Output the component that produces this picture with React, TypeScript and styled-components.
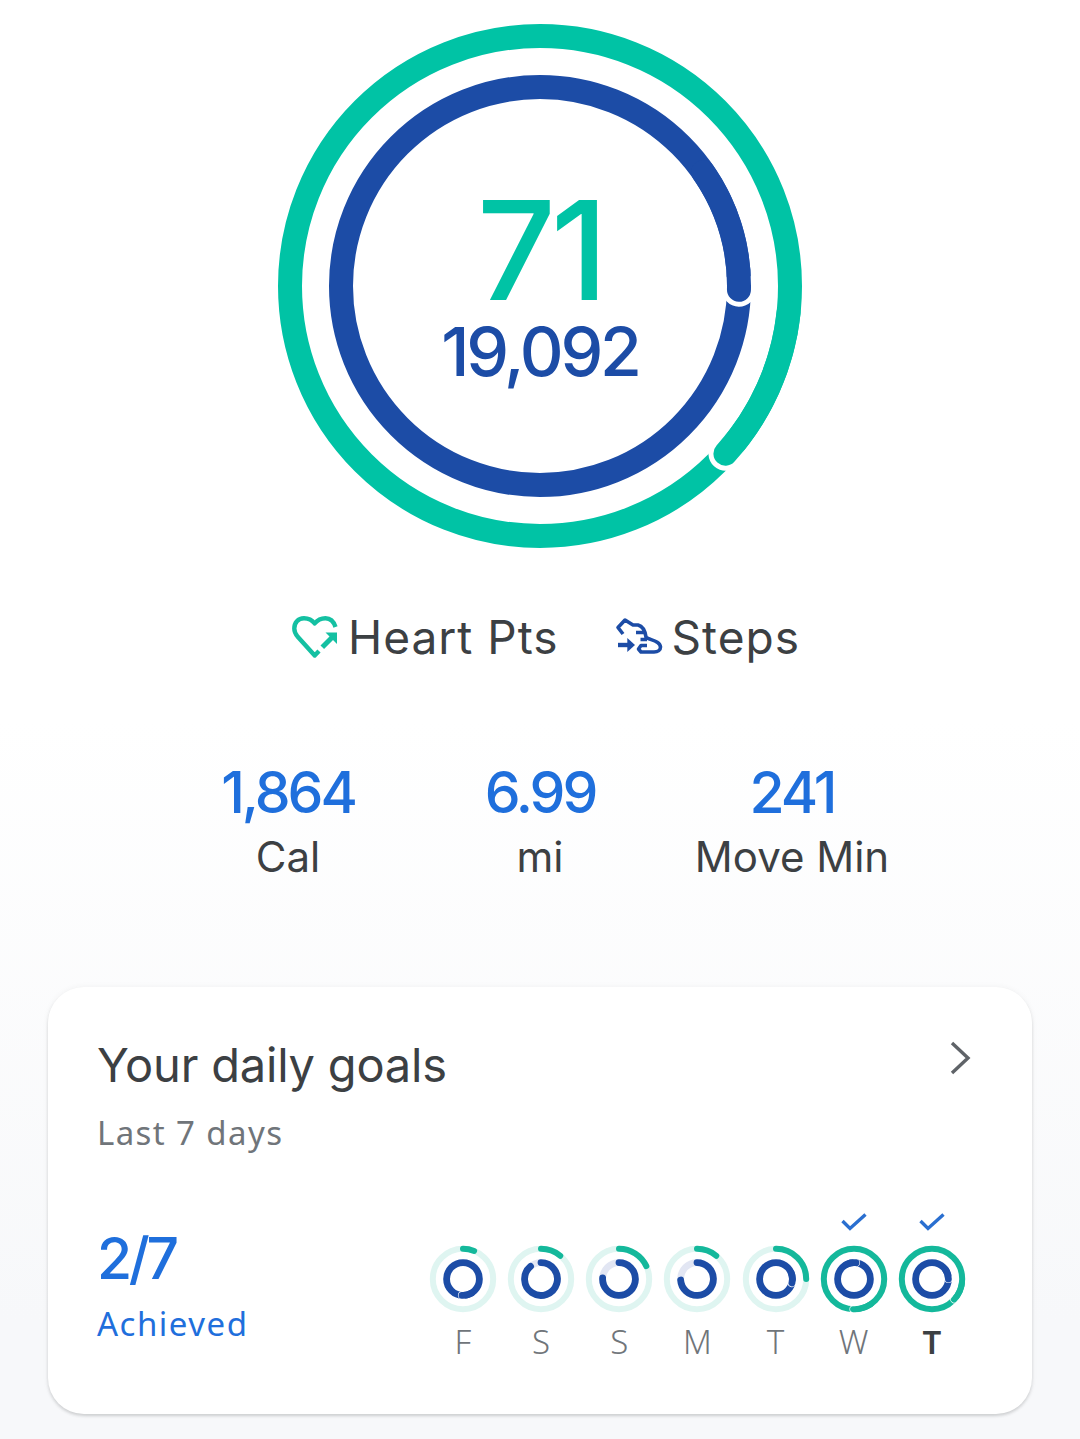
import React from "react";
import styled, { createGlobalStyle } from "styled-components";

const GREEN = "#00c3a5";
const BLUE = "#1c4ca6";
const LINK = "#1f6fdc";

const GlobalStyle = createGlobalStyle`
  html, body {
    margin: 0;
    padding: 0;
    background: #f7f8fa;
  }
  body {
    font-family: Inter, "Noto Sans", sans-serif;
    color: #3c4043;
  }
`;

const Page = styled.div`
  width: 1080px;
  height: 1439px;
  overflow: hidden;
  display: flex;
  flex-direction: column;
  align-items: center;
  padding-top: 24px;
  box-sizing: border-box;
  background: linear-gradient(#fff 0, #fff 720px, #f7f8fa 1320px);
`;

const Hero = styled.div`
  position: relative;
  width: 524px;
  height: 524px;
  flex: none;
`;

const HeroText = styled.div`
  position: absolute;
  inset: 0;
  display: flex;
  flex-direction: column;
  align-items: center;
  padding-top: 157px;
  box-sizing: border-box;
`;

const HeartCount = styled.div`
  font-size: 138px;
  line-height: 137px;
  font-weight: 550;
  color: ${GREEN};
  letter-spacing: -5px;
`;

const StepCount = styled.div`
  font-size: 68px;
  line-height: 66px;
  font-weight: 550;
  color: ${BLUE};
  letter-spacing: -3.2px;
`;

const Legend = styled.div`
  display: flex;
  align-items: center;
  gap: 56px;
  margin-top: 62px;
  margin-left: 11px;
`;

const LegendItem = styled.div`
  display: flex;
  align-items: center;
  gap: 9px;
  font-size: 46px;
  line-height: 54px;
  letter-spacing: 1px;
  color: #3c4043;
`;

const Stats = styled.div`
  display: grid;
  grid-template-columns: repeat(3, 252px);
  margin-top: 96px;
`;

const Stat = styled.div`
  display: flex;
  flex-direction: column;
  align-items: center;
`;

const StatValue = styled.div`
  font-size: 57px;
  line-height: 66px;
  font-weight: 550;
  color: ${LINK};
  letter-spacing: -3px;
`;

const StatLabel = styled.div`
  font-size: 42px;
  line-height: 50px;
  color: #3c4043;
  margin-top: 6px;
`;

const Card = styled.section`
  width: 984px;
  height: 427px;
  flex: none;
  margin-top: 105px;
  padding: 50px 61px 0 49px;
  box-sizing: border-box;
  background: #fff;
  border-radius: 36px;
  box-shadow: 0 2px 3px rgba(60, 64, 67, 0.2), 0 0 6px rgba(60, 64, 67, 0.05);
`;

const CardHead = styled.div`
  display: flex;
  justify-content: space-between;
  align-items: flex-start;
`;

const CardTitle = styled.h2`
  margin: 0;
  font-size: 47px;
  line-height: 56px;
  font-weight: 400;
  letter-spacing: -0.2px;
  color: #3c4043;
`;

const CardSub = styled.div`
  font-family: "Noto Sans", sans-serif;
  font-size: 33px;
  line-height: 44px;
  color: #70757a;
  letter-spacing: 1.4px;
  margin-top: 18px;
`;

const Chevron = styled.svg`
  width: 24px;
  height: 36px;
  margin: 3px -1px 0 0;
`;

const GoalsRow = styled.div`
  display: flex;
  justify-content: space-between;
  align-items: flex-start;
  margin-top: 57px;
`;

const Summary = styled.div`
  display: flex;
  flex-direction: column;
  padding-top: 14px;
`;

const SummaryValue = styled.div`
  font-size: 57px;
  line-height: 66px;
  font-weight: 550;
  color: ${LINK};
  letter-spacing: -3.4px;
`;

const SummaryLabel = styled.div`
  font-family: "Noto Sans", sans-serif;
  font-size: 33px;
  line-height: 44px;
  color: ${LINK};
  letter-spacing: 1.5px;
  margin-top: 10px;
`;

const Days = styled.div`
  display: flex;
`;

const Day = styled.div`
  width: 78.2px;
  display: flex;
  flex-direction: column;
  align-items: center;
`;

const CheckSlot = styled.div`
  height: 32px;
  display: flex;
  justify-content: center;
  align-items: flex-start;
`;

const DayLetter = styled.div<{ $today?: boolean }>`
  font-family: "Noto Sans", sans-serif;
  font-size: 33px;
  line-height: 40px;
  margin-top: 8px;
  color: ${(p) => (p.$today ? "#3c4043" : "#70757a")};
  font-weight: ${(p) => (p.$today ? 600 : 300)};
`;

// point on a circle, fraction 0 = top, clockwise
function pt(c: number, r: number, f: number) {
  const a = f * Math.PI * 2 - Math.PI / 2;
  return `${(c + r * Math.cos(a)).toFixed(2)} ${(c + r * Math.sin(a)).toFixed(2)}`;
}

function arc(c: number, r: number, from: number, to: number) {
  const large = to - from > 0.5 ? 1 : 0;
  return `M${pt(c, r, from)} A${r} ${r} 0 ${large} 1 ${pt(c, r, to)}`;
}

interface RingProps {
  c: number;
  r: number;
  w: number;
  value: number;
  color: string;
  track?: string;
  halo: number;
  start?: number;
}

// value above 1 means the goal was passed, the end laps over the ring
function Ring({ c, r, w, value, color, track, halo, start = 0 }: RingProps) {
  if (value <= 1) {
    return (
      <>
        {track && <circle cx={c} cy={c} r={r} fill="none" stroke={track} strokeWidth={w} />}
        <path d={arc(c, r, start, value)} fill="none" stroke={color} strokeWidth={w} strokeLinecap="round" />
      </>
    );
  }
  const end = value - 1;
  return (
    <>
      <circle cx={c} cy={c} r={r} fill="none" stroke={color} strokeWidth={w} />
      <path d={arc(c, r, end - 0.001, end)} fill="none" stroke="#fff" strokeWidth={w + halo * 2} strokeLinecap="round" />
      <path d={arc(c, r, end - 0.1, end)} fill="none" stroke={color} strokeWidth={w} strokeLinecap="round" />
    </>
  );
}

const HeartIcon = () => (
  <svg width="48" height="44" viewBox="-1 -1 48 44" fill="none">
    <path
      d="M43.5 11 C41.5 5 38 2.3 33.5 2.3 C29 2.3 25.5 4 22.7 7.5 C20 4 16.5 2.3 12 2.3 C6 2.3 2.3 7 2.3 12.5 C2.3 15.5 3.5 18 5.5 20.5 L22.7 39.5 L27 35"
      stroke="#14c0a2"
      strokeWidth="4.4"
      strokeLinejoin="round"
    />
    <path d="M30.3 31.3 L41 20.5" stroke="#14c0a2" strokeWidth="5" />
    <path d="M33.5 16.5 H45 V28 Z" fill="#14c0a2" />
  </svg>
);

const StepsIcon = () => (
  <svg width="48" height="42" viewBox="-1 -2 48 42" fill="none">
    <path
      d="M7 16 L2 9.5 L9 2 L17 7 H22 C26 8 29 12 30 19 C32 22 44 22 44.5 29 C44.5 32 42 34 38 34 H25 L22.5 31 L25 27.5 H31 M20 14.5 H28 M24.5 21.5 H31"
      stroke={BLUE}
      strokeWidth="3.6"
      strokeLinejoin="round"
    />
    <path d="M2 27 H12" stroke={BLUE} strokeWidth="4.4" />
    <path d="M11.3 20 L19 27 L11.3 34 Z" fill={BLUE} />
  </svg>
);

const CheckIcon = () => (
  <svg width="28" height="20" viewBox="0 0 28 20" fill="none">
    <path d="M2.5 9 L10 16.5 L25.5 2.5" stroke="#2a6fd0" strokeWidth="3.4" />
  </svg>
);

interface DayData {
  letter: string;
  green: number;
  blue: number;
  done?: boolean;
  today?: boolean;
}

const days: DayData[] = [
  { letter: "F", green: 0.06, blue: 1.51 },
  { letter: "S", green: 0.11, blue: 0.89 },
  { letter: "S", green: 0.18, blue: 0.76 },
  { letter: "M", green: 0.11, blue: 0.74 },
  { letter: "T", green: 0.25, blue: 1.29 },
  { letter: "W", green: 1.505, blue: 1.02, done: true },
  { letter: "T", green: 1.37, blue: 1.25, done: true, today: true },
];

const stats = [
  { value: "1,864", label: "Cal" },
  { value: "6.99", label: "mi" },
  { value: "241", label: "Move Min" },
];

const DayRings = ({ green, blue }: { green: number; blue: number }) => (
  <svg width="70" height="70" viewBox="0 0 70 70">
    <Ring c={35} r={30.2} w={6} value={green} color="#14b89b" track="#dff5f1" halo={0.6} />
    <Ring c={35} r={16.4} w={6.8} value={blue} color={BLUE} track="#e2e6f3" halo={0.6} />
  </svg>
);

export default function App() {
  return (
    <>
      <GlobalStyle />
      <Page>
        <Hero>
          <svg width="524" height="524" viewBox="0 0 524 524">
            <Ring c={262} r={250} w={24} value={1.367} color={GREEN} halo={5} />
            <Ring c={262} r={199} w={24} value={1.253} color={BLUE} halo={5} />
          </svg>
          <HeroText>
            <HeartCount>71</HeartCount>
            <StepCount>19,092</StepCount>
          </HeroText>
        </Hero>

        <Legend>
          <LegendItem>
            <HeartIcon />
            Heart Pts
          </LegendItem>
          <LegendItem>
            <StepsIcon />
            Steps
          </LegendItem>
        </Legend>

        <Stats>
          {stats.map((s) => (
            <Stat key={s.label}>
              <StatValue>{s.value}</StatValue>
              <StatLabel>{s.label}</StatLabel>
            </Stat>
          ))}
        </Stats>

        <Card>
          <CardHead>
            <div>
              <CardTitle>Your daily goals</CardTitle>
              <CardSub>Last 7 days</CardSub>
            </div>
            <Chevron viewBox="0 0 24 36" fill="none">
              <path d="M4 3 L20 18 L4 33" stroke="#5f6368" strokeWidth="3.4" />
            </Chevron>
          </CardHead>
          <GoalsRow>
            <Summary>
              <SummaryValue>2/7</SummaryValue>
              <SummaryLabel>Achieved</SummaryLabel>
            </Summary>
            <Days>
              {days.map((d, i) => (
                <Day key={i}>
                  <CheckSlot>{d.done && <CheckIcon />}</CheckSlot>
                  <DayRings green={d.green} blue={d.blue} />
                  <DayLetter $today={d.today}>{d.letter}</DayLetter>
                </Day>
              ))}
            </Days>
          </GoalsRow>
        </Card>
      </Page>
    </>
  );
}
